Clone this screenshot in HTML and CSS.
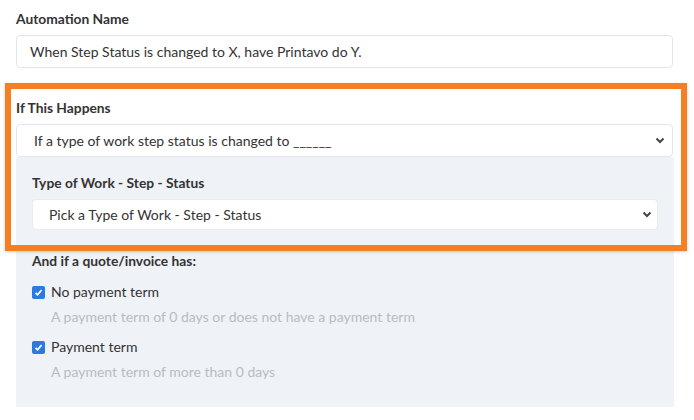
FILE: index.html
```html
<!DOCTYPE html>
<html lang="en">

<head>
    <meta charset="UTF-8">
    <meta name="viewport" content="width=device-width, initial-scale=1.0">
    <title>Automation - Edit</title>
    <link rel="stylesheet" href="styles.css">
</head>

<body>

    <div class="form">

        <div class="field">
            <label class="field-label" for="automationName">Automation Name</label>
            <input class="text-input" type="text" id="automationName"
                value="When Step Status is changed to X, have Printavo do Y.">
        </div>

        <div class="field trigger">
            <label class="field-label">If This Happens</label>
            <div class="select">
                <span>If a type of work step status is changed to ______</span>
                <svg class="chevron" width="10" height="7" viewBox="0 0 10 7">
                    <path d="M1.5 1.5 L5 5 L8.5 1.5" fill="none" stroke="#444" stroke-width="2" />
                </svg>
            </div>
        </div>

        <div class="panel">
            <label class="field-label">Type of Work - Step - Status</label>
            <div class="select select-small">
                <span>Pick a Type of Work - Step - Status</span>
                <svg class="chevron" width="10" height="7" viewBox="0 0 10 7">
                    <path d="M1.5 1.5 L5 5 L8.5 1.5" fill="none" stroke="#444" stroke-width="2" />
                </svg>
            </div>

            <p class="group-label">And if a quote/invoice has:</p>

            <div class="option">
                <div class="check-row">
                    <span class="checkbox">
                        <svg width="9" height="9" viewBox="0 0 9 9">
                            <path d="M1.5 4.8 L3.6 6.8 L7.6 2" fill="none" stroke="#fff" stroke-width="1.8" />
                        </svg>
                    </span>
                    <span>No payment term</span>
                </div>
                <p class="help">A payment term of 0 days or does not have a payment term</p>
            </div>

            <div class="option">
                <div class="check-row">
                    <span class="checkbox">
                        <svg width="9" height="9" viewBox="0 0 9 9">
                            <path d="M1.5 4.8 L3.6 6.8 L7.6 2" fill="none" stroke="#fff" stroke-width="1.8" />
                        </svg>
                    </span>
                    <span>Payment term</span>
                </div>
                <p class="help">A payment term of more than 0 days</p>
            </div>
        </div>

        <!-- annotation box drawn over the trigger section -->
        <div class="highlight"></div>

    </div>

</body>

</html>
```

FILE: styles.css
```css
body {
    font-family: Lato, "Liberation Sans", sans-serif;
    background-color: #fff;
    color: #333;
    margin: 0;
    padding: 0;
}

.form {
    position: relative;
    padding: 11px 21px 0 16px;
}

.field {
    display: flex;
    flex-direction: column;
}

.field-label {
    font-size: 13.8px;
    line-height: 16px;
    font-weight: bold;
    color: #333;
    margin-bottom: 8px;
}

.text-input {
    height: 33px;
    box-sizing: border-box;
    border: 1px solid #e3e6ea;
    border-radius: 4px;
    padding: 0 13px;
    font-family: inherit;
    font-size: 14px;
    color: #333;
    background: #fff;
}

.trigger {
    margin-top: 32px;
}

.select {
    display: flex;
    align-items: center;
    justify-content: space-between;
    height: 33px;
    box-sizing: border-box;
    border: 1px solid #e3e6ea;
    border-radius: 4px;
    padding: 0 7px 0 17px;
    font-size: 14px;
    color: #333;
    background: #fff;
}

.select-small {
    height: 31px;
    border-color: #e8ebef;
    padding: 0 5px 0 16px;
}

.panel {
    display: flex;
    flex-direction: column;
    background-color: #eff2f7;
    margin-right: -1px;
    padding: 18px 16px 26px 16px;
}

.group-label {
    margin: 23px 0 0 0;
    font-size: 13.8px;
    line-height: 16px;
    font-weight: bold;
    color: #333;
}

.option {
    margin-top: 12px;
}

.group-label + .option {
    margin-top: 14px;
}

.check-row {
    display: flex;
    align-items: center;
    gap: 6px;
    font-size: 14px;
    line-height: 18px;
    color: #333;
}

.checkbox {
    display: flex;
    align-items: center;
    justify-content: center;
    width: 13px;
    height: 13px;
    border-radius: 2px;
    background-color: #2a7ae2;
}

.help {
    margin: 7px 0 0 19px;
    font-size: 14px;
    line-height: 18px;
    color: #b8bcc3;
}

.highlight {
    position: absolute;
    top: 83px;
    left: 5px;
    width: 670px;
    height: 156px;
    border: 6px solid #f57f22;
    box-shadow: 0 1px 3px rgba(0, 0, 0, 0.2);
    pointer-events: none;
}
```
